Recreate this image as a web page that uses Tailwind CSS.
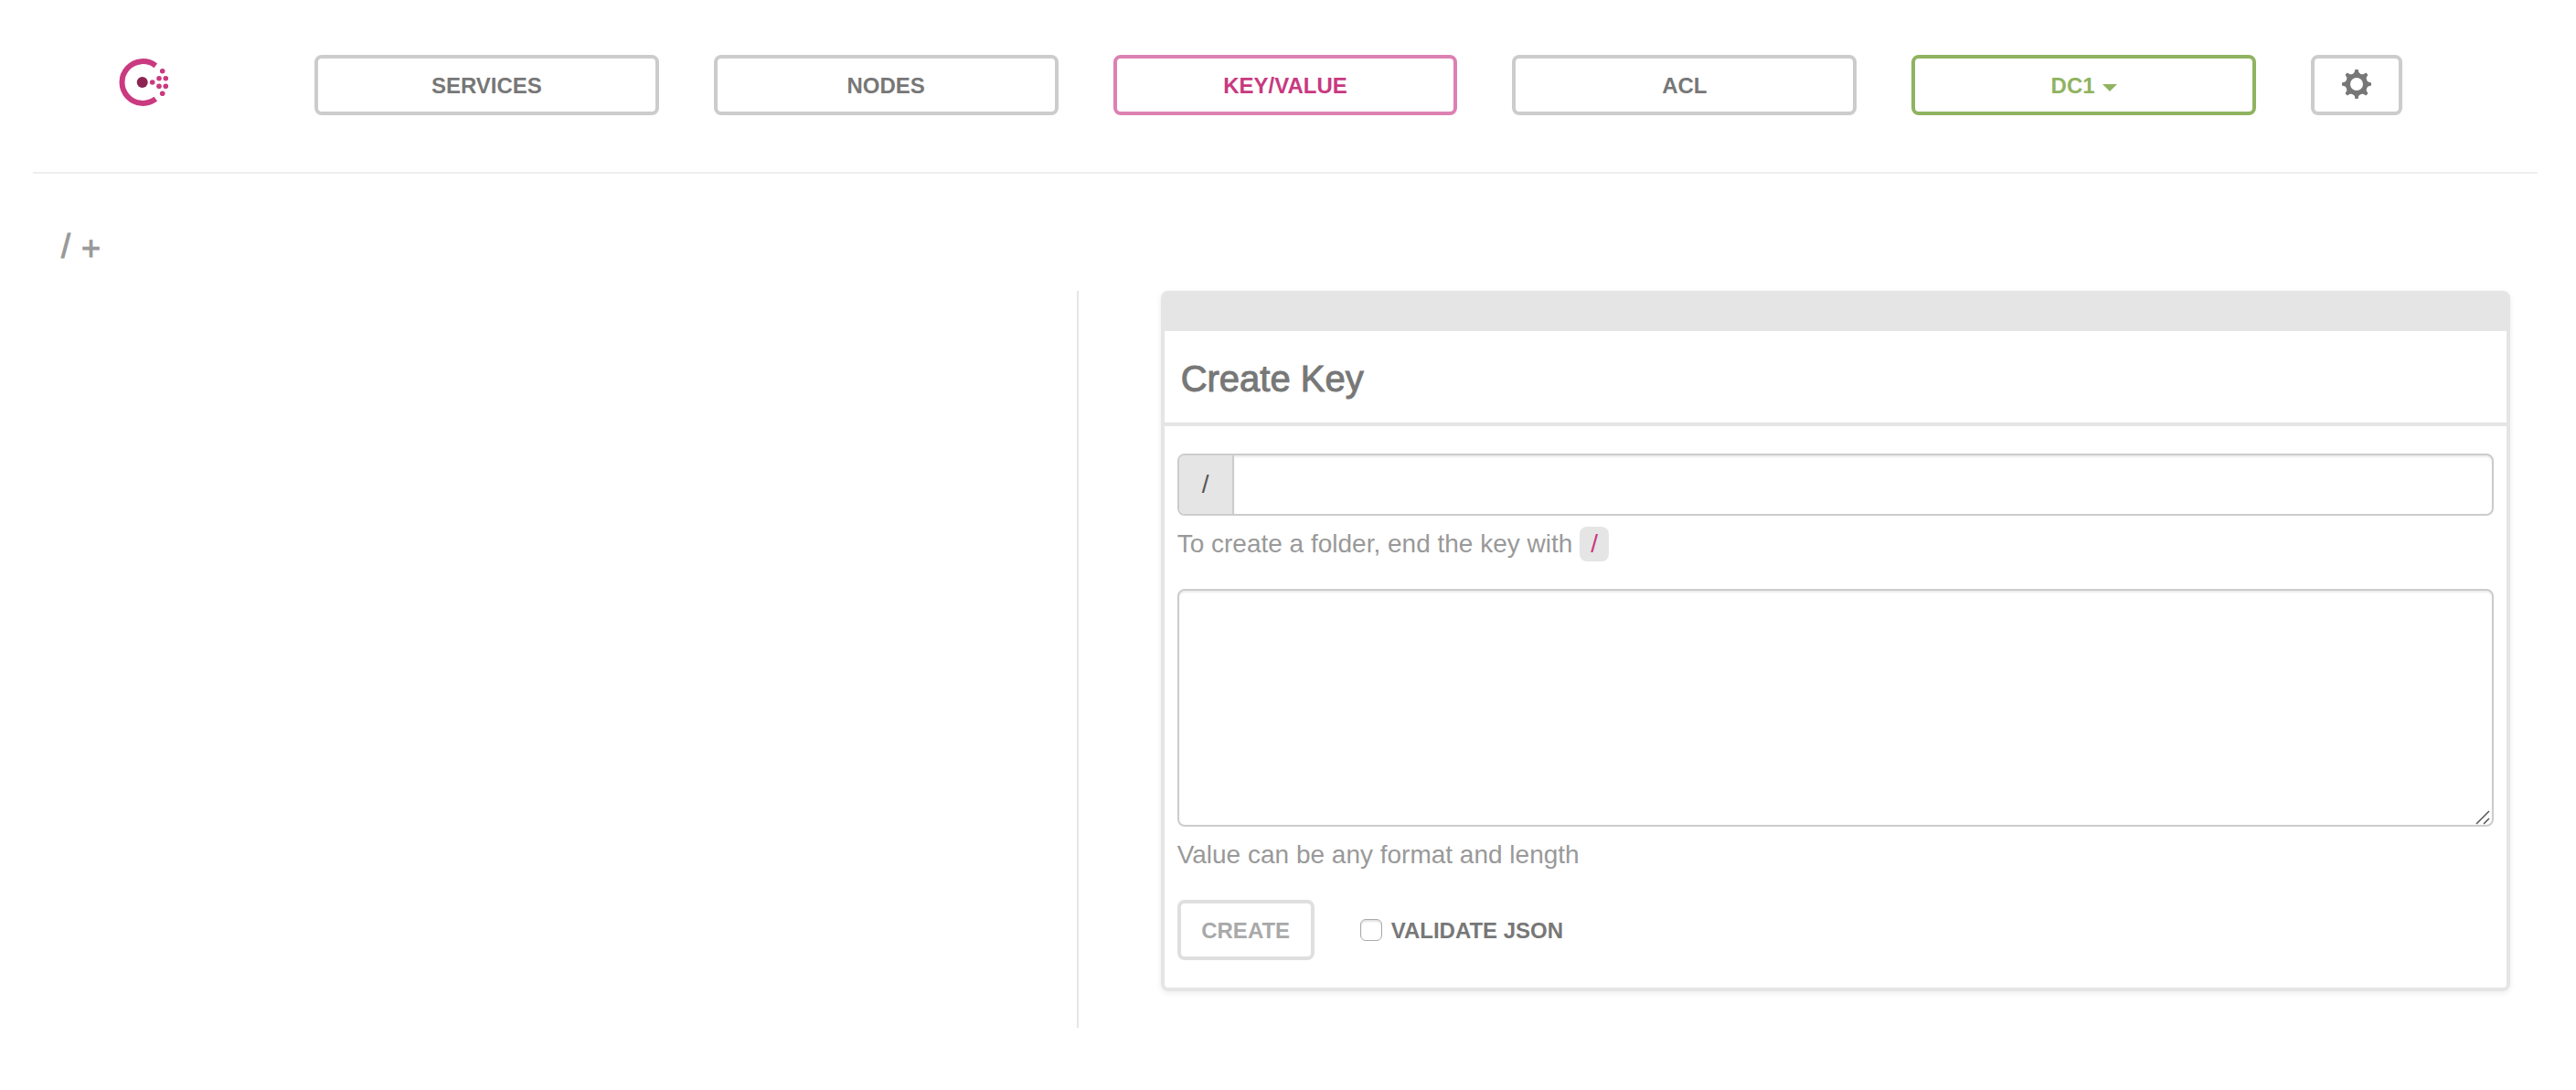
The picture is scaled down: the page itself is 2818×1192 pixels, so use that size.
<!DOCTYPE html>
<html lang="en">
<head>
<meta charset="utf-8">
<title>Consul</title>
<script src="https://cdn.jsdelivr.net/npm/@tailwindcss/browser@4"></script>
</head>
<body class="bg-white font-['Liberation_Sans',Arial,sans-serif] text-[#777]">
<div class="pl-9 pr-[42px]">
  <header class="flex items-center border-b-2 border-[#eee] pt-[60px] pb-[62px] pr-[148px] pl-[92px]">
    <a href="#" aria-label="Consul" class="mr-[156px] block h-[60px] w-[60px] shrink-0">
      <svg viewBox="127 63 60 60" class="h-[60px] w-[60px]">
        <path d="M169.300 71.800A22.900 22.900 0 1 0 169.300 108.200" fill="none" stroke="#ca3a80" stroke-width="6"/>
        <circle cx="154.700" cy="90" r="6" fill="#8c2552"/>
        <g fill="#ca3a80"><circle cx="165.700" cy="90" r="2.800"/><circle cx="173" cy="85.700" r="2.800"/><circle cx="180.300" cy="85.700" r="2.800"/><circle cx="173" cy="94.300" r="2.800"/><circle cx="180.300" cy="94.300" r="2.800"/><circle cx="176.700" cy="77.700" r="2.800"/><circle cx="176.700" cy="102.300" r="2.800"/></g>
      </svg>
    </a>
    <nav class="grid grow grid-cols-5 gap-[60px] text-center text-2xl font-bold">
      <a href="#" class="flex h-[66px] items-center justify-center rounded-lg border-4 border-[#ccc] pt-[2px]">SERVICES</a>
      <a href="#" class="flex h-[66px] items-center justify-center rounded-lg border-4 border-[#ccc] pt-[2px]">NODES</a>
      <a href="#" class="flex h-[66px] items-center justify-center rounded-lg border-4 border-[#dc81b2] pt-[2px] text-[#c8397f]">KEY/VALUE</a>
      <a href="#" class="flex h-[66px] items-center justify-center rounded-lg border-4 border-[#ccc] pt-[2px]">ACL</a>
      <button class="flex h-[66px] items-center justify-center gap-2 rounded-lg border-4 border-[#8fb360] pt-[2px] text-[#8fb360]">DC1
        <svg viewBox="0 0 16 8" class="mt-1 h-2 w-4" fill="currentColor"><path d="M0 0H16L8 8Z"/></svg>
      </button>
    </nav>
    <button aria-label="Settings" class="ml-[60px] flex h-[66px] w-[100px] shrink-0 items-center justify-center rounded-lg border-4 border-[#ccc] pb-[2px]">
      <svg viewBox="-16 -16 32 32" class="h-8 w-8" fill="currentColor">
        <circle r="9.500" fill="none" stroke="currentColor" stroke-width="5"/>
        <g id="teeth"><path id="tooth" d="M-4.500-10.500Q-2-12-1.600-16H1.600Q2-12 4.500-10.500Z"/><use href="#tooth" transform="rotate(90)"/><use href="#tooth" transform="rotate(180)"/><use href="#tooth" transform="rotate(270)"/></g>
        <use href="#teeth" transform="rotate(45)"/>
      </svg>
    </button>
  </header>

  <main>
    <nav aria-label="Key path" class="flex h-32 items-start gap-3 pt-[60px] pl-[31px] text-4xl leading-[40px] text-[#999] [-webkit-text-stroke:1px_#999]">
      <a href="#">/</a><a href="#" class="leading-[44px]">+</a>
    </nav>
    <div class="grid grid-cols-12">
      <section aria-label="Keys" class="col-span-5"></section>
      <section class="col-span-7 border-l-2 border-[#e5e5e5] pr-[30px] pb-10 pl-[90px]">
        <form class="rounded-lg border-4 border-[#e5e5e5] shadow-[0_2px_6px_rgba(0,0,0,0.08)]">
          <div class="h-10 bg-[#e5e5e5]"></div>
          <h1 class="flex h-[104px] items-center border-b-4 border-[#e5e5e5] px-[18px] pt-1 text-[40px] leading-[48px] [-webkit-text-stroke:1px_#777]">Create Key</h1>
          <div class="px-[14px] py-[30px]">
            <div class="flex h-[68px] rounded-lg border-2 border-[#ccc]">
              <label for="key" class="flex w-[60px] shrink-0 items-center justify-center rounded-l-md border-r-2 border-[#ccc] bg-[#e5e5e5] text-[28px] text-[#555]">/</label>
              <input id="key" type="text" class="min-w-0 grow rounded-r-md px-6 text-[28px] shadow-[inset_0_2px_2px_rgba(0,0,0,0.075)]">
            </div>
            <p class="mt-3 mb-[30px] text-[28px] leading-[38px] text-[#999]">To create a folder, end the key with <code class="inline-block rounded-lg bg-[#e5e5e5] px-3 font-['Liberation_Sans',Arial,sans-serif] text-[#c8397f]">/</code></p>
            <div class="relative">
              <textarea id="value" aria-label="Value" class="block h-[260px] w-full resize-none rounded-lg border-2 border-[#ccc] px-6 py-3 text-[28px] shadow-[inset_0_2px_2px_rgba(0,0,0,0.075)]"></textarea>
              <svg viewBox="0 0 16 16" class="pointer-events-none absolute right-1 bottom-[2px] h-4 w-4" fill="none" stroke="#555" stroke-width="1.500"><path d="M1 15L15 1M9 15L15 9"/></svg>
            </div>
            <p class="mt-3 mb-[30px] text-[28px] leading-[38px] text-[#999]">Value can be any format and length</p>
            <div class="flex items-center text-2xl font-bold">
              <button type="submit" disabled class="flex h-[66px] w-[150px] items-center justify-center rounded-lg border-4 border-[#dfdfdf] pt-[2px] text-[#a9a9a9]">CREATE</button>
              <input id="json" type="checkbox" class="ml-[50px] h-6 w-6 appearance-none rounded-md border border-[#aaa] bg-white shadow-[inset_0_2px_2px_rgba(0,0,0,0.12)]">
              <label for="json" class="ml-[10px] pt-[2px]">VALIDATE JSON</label>
            </div>
          </div>
        </form>
      </section>
    </div>
  </main>
</div>
</body>
</html>
